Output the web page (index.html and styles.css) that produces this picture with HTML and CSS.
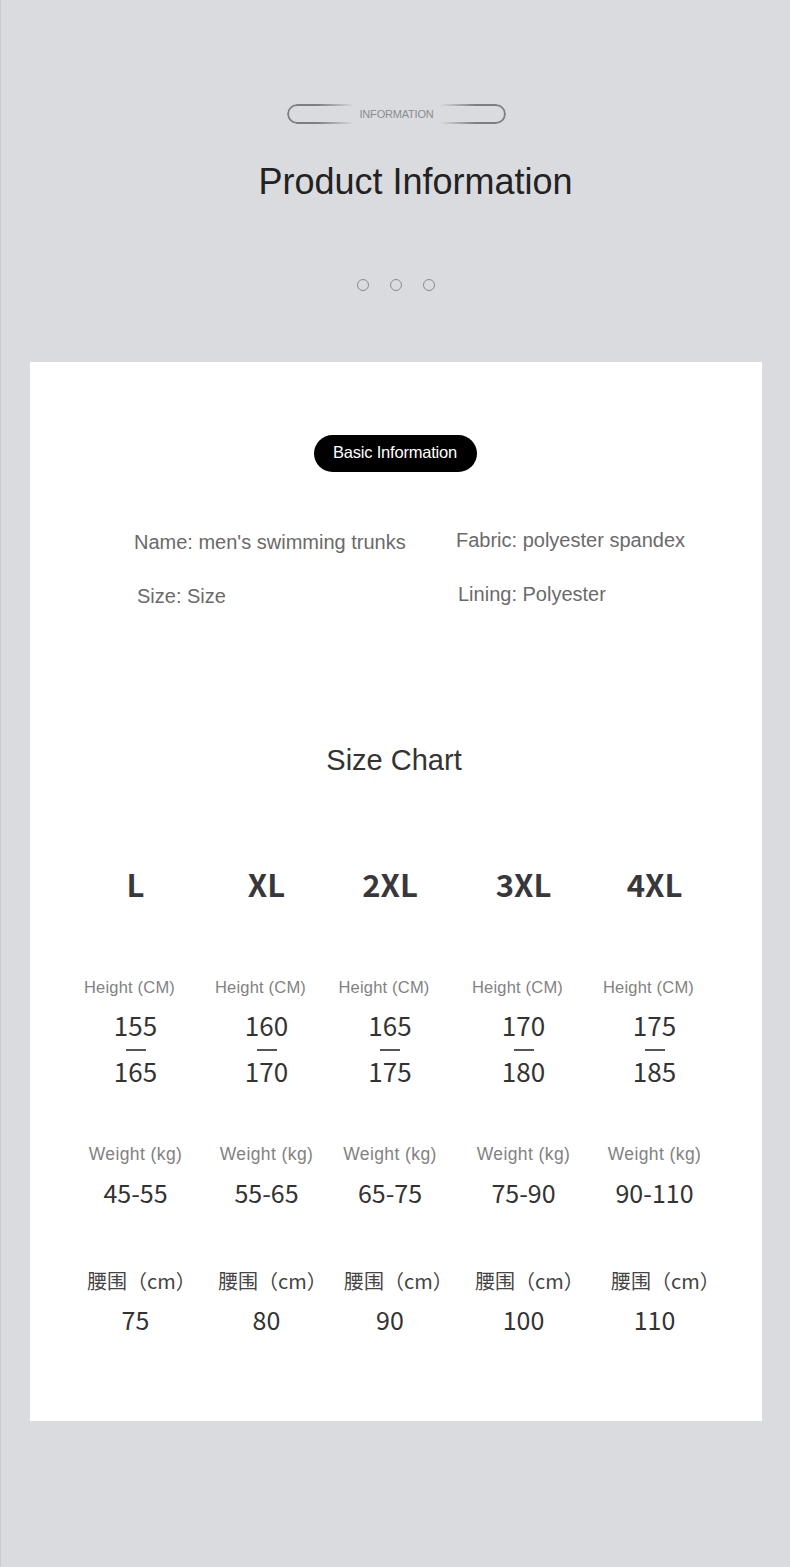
FILE: index.html
```html
<!DOCTYPE html>
<html lang="en">
<head>
<meta charset="utf-8">
<title>Product Information</title>
<link rel="stylesheet" href="styles.css">
</head>
<body>
<div class="page">
  <header class="hero">
    <div class="tag">
      <span class="tag-cap tag-left"></span>
      <span class="tag-text">INFORMATION</span>
      <span class="tag-cap tag-right"></span>
    </div>
    <h1 class="hero-title">Product Information</h1>
    <div class="dots">
      <span class="dot"></span><span class="dot"></span><span class="dot"></span>
    </div>
  </header>

  <section class="card">
    <div class="pill-wrap"><span class="pill">Basic Information</span></div>

    <div class="info">
      <p class="info-item i1">Name: men's swimming trunks</p>
      <p class="info-item i2">Fabric: polyester spandex</p>
      <p class="info-item i3">Size: Size</p>
      <p class="info-item i4">Lining: Polyester</p>
    </div>

    <h2 class="chart-title">Size Chart</h2>

    <div class="chart">
      <div class="size">L</div>
      <div class="size">XL</div>
      <div class="size">2XL</div>
      <div class="size">3XL</div>
      <div class="size">4XL</div>

      <div class="label h">Height (CM)</div>
      <div class="label h">Height (CM)</div>
      <div class="label h">Height (CM)</div>
      <div class="label h">Height (CM)</div>
      <div class="label h">Height (CM)</div>

      <div class="range"><span class="num">155</span><span class="dash"></span><span class="num">165</span></div>
      <div class="range"><span class="num">160</span><span class="dash"></span><span class="num">170</span></div>
      <div class="range"><span class="num">165</span><span class="dash"></span><span class="num">175</span></div>
      <div class="range"><span class="num">170</span><span class="dash"></span><span class="num">180</span></div>
      <div class="range"><span class="num">175</span><span class="dash"></span><span class="num">185</span></div>

      <div class="label w">Weight (kg)</div>
      <div class="label w">Weight (kg)</div>
      <div class="label w">Weight (kg)</div>
      <div class="label w">Weight (kg)</div>
      <div class="label w">Weight (kg)</div>

      <div class="val wv">45-55</div>
      <div class="val wv">55-65</div>
      <div class="val wv">65-75</div>
      <div class="val wv">75-90</div>
      <div class="val wv">90-110</div>

      <div class="cn">腰围（cm）</div>
      <div class="cn">腰围（cm）</div>
      <div class="cn">腰围（cm）</div>
      <div class="cn">腰围（cm）</div>
      <div class="cn">腰围（cm）</div>

      <div class="val ww">75</div>
      <div class="val ww">80</div>
      <div class="val ww">90</div>
      <div class="val ww">100</div>
      <div class="val ww">110</div>
    </div>
  </section>
</div>
</body>
</html>
```

FILE: styles.css
```css
html, body {
  margin: 0;
  padding: 0;
}
body {
  background: #dadbdf;
  font-family: "Liberation Sans", Arial, sans-serif;
  width: 790px;
  min-height: 1567px;
  border-left: 1px solid #c9cacd;
  box-sizing: border-box;
}
.page {
  padding-top: 104px;
}

/* ---------- hero ---------- */
.hero {
  display: flex;
  flex-direction: column;
  align-items: center;
}
.tag {
  display: flex;
  align-items: center;
  width: 219px;
  height: 20px;
  margin-left: 2px;
}
.tag-cap {
  flex: 1;
  height: 20px;
  box-sizing: border-box;
  border: 2px solid #7d7e82;
}
.tag-left {
  border-right: none;
  border-radius: 10px 0 0 10px;
  -webkit-mask-image: linear-gradient(to right, #000 0%, #000 45%, transparent 100%);
  mask-image: linear-gradient(to right, #000 0%, #000 45%, transparent 100%);
}
.tag-right {
  border-left: none;
  border-radius: 0 10px 10px 0;
  -webkit-mask-image: linear-gradient(to left, #000 0%, #000 45%, transparent 100%);
  mask-image: linear-gradient(to left, #000 0%, #000 45%, transparent 100%);
}
.tag-text {
  font-size: 11px;
  color: #8a8b8f;
  letter-spacing: -0.2px;
  padding: 0 6px;
  line-height: 20px;
}
.hero-title {
  margin: 36px 0 0 40px;
  font-weight: 400;
  font-size: 36px;
  line-height: 44px;
  color: #222;
}
.dots {
  display: flex;
  gap: 21px;
  margin: 75px 0 0 0;
}
.dot {
  width: 12px;
  height: 12px;
  box-sizing: border-box;
  border: 1.5px solid #8a8b8f;
  border-radius: 50%;
}

/* ---------- card ---------- */
.card {
  margin: 71px 0 0 29px;
  width: 732px;
  height: 1059px;
  box-sizing: border-box;
  background: #fff;
  padding-top: 73px;
}
.pill-wrap {
  display: flex;
  justify-content: center;
  padding-right: 2px;
}
.pill {
  display: inline-flex;
  align-items: center;
  justify-content: center;
  width: 163px;
  height: 37px;
  border-radius: 19px;
  background: #000;
  color: #fff;
  font-size: 16.5px;
  letter-spacing: -0.2px;
  padding-bottom: 2px;
  box-sizing: border-box;
}

.info {
  display: grid;
  grid-template-columns: 322px 1fr;
  row-gap: 30px;
  margin: 58px 0 0 104px;
}
.info-item {
  margin: 0;
  font-size: 20px;
  line-height: 24px;
  color: #6a6a6a;
}
.i2 { margin-top: -2px; }
.i3 { padding-left: 3px; }
.i4 { padding-left: 2px; margin-top: -2px; }

.chart-title {
  margin: 134px 0 0 0;
  text-align: center;
  font-weight: 400;
  font-size: 29px;
  line-height: 36px;
  color: #333;
  padding-right: 4px;
}

.chart {
  display: grid;
  grid-template-columns: 131px 131px 116px 151px 111px;
  margin: 88px 0 0 40px;
  text-align: center;
  font-family: "Noto Sans CJK SC", "Noto Sans", sans-serif;
}
.size {
  font-size: 31px;
  font-weight: 700;
  line-height: 36px;
  color: #38383c;
}
.label {
  font-family: "Liberation Sans", Arial, sans-serif;
  line-height: 20px;
  color: #828282;
}
.label.h {
  font-size: 16.5px;
  letter-spacing: 0.2px;
  margin-top: 75px;
  padding-right: 12px;
}
.label.w {
  font-size: 17.5px;
  letter-spacing: 0.4px;
  margin-top: 58px;
}
.range {
  display: flex;
  flex-direction: column;
  align-items: center;
  margin-top: 13px;
}
.num {
  font-size: 26px;
  line-height: 30px;
  color: #333;
}
.dash {
  width: 20px;
  height: 16px;
}
.dash::before {
  content: "";
  display: block;
  margin-top: 9px;
  height: 1.5px;
  background: #555;
}
.val {
  font-size: 25px;
  line-height: 30px;
  color: #333;
}
.wv { margin-top: 13px; }
.cn {
  margin-top: 61px;
  padding-left: 12px;
  font-size: 20px;
  line-height: 26px;
  color: #444;
  white-space: nowrap;
}
.ww { margin-top: 10px; }
```
